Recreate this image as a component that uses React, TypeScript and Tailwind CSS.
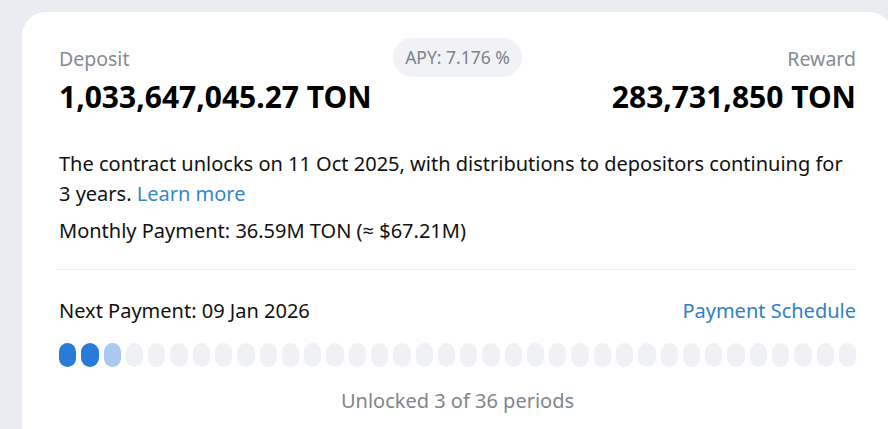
import React from "react";

export default function App() {
  const total = 36;
  const segs = Array.from({ length: total }, (_, i) => i);
  return (
    <div
      className="w-[888px] h-[429px] overflow-hidden bg-[#e9ecf0] pt-[12px] pl-[22px]"
      style={{ fontFamily: '"Noto Sans", "Open Sans", sans-serif' }}
    >
      <div className="w-[871px] h-[440px] bg-white rounded-[24px] px-[37px] pt-[26px]">
        <div className="grid grid-cols-[1fr_auto_1fr] items-start">
          <div className="pt-[8px] whitespace-nowrap">
            <div className="text-[19.5px] leading-[26px] text-[#868b92]">Deposit</div>
            <div className="mt-[7px] text-[30px] leading-[36px] font-bold text-black">
              1,033,647,045.27 TON
            </div>
          </div>
          <div className="h-[39px] px-[12px] rounded-full bg-[#f0f2f5] flex items-center text-[17.5px] text-[#7d838a]">
            APY: 7.176 %
          </div>
          <div className="pt-[8px] text-right whitespace-nowrap">
            <div className="text-[19.5px] leading-[26px] text-[#868b92]">Reward</div>
            <div className="mt-[7px] text-[30px] leading-[36px] font-bold text-black">
              283,731,850 TON
            </div>
          </div>
        </div>

        <p className="mt-[34px] text-[20px] leading-[30px] text-[#111]">
          The contract unlocks on 11 Oct 2025, with distributions to depositors continuing for 3
          years. <span className="text-[#3388c8]">Learn more</span>
        </p>
        <p className="mt-[7px] text-[20px] leading-[30px] text-[#111]">
          Monthly Payment: 36.59M TON (≈ $67.21M)
        </p>

        <div className="mt-[23px] h-px bg-[#eceef1] -ml-[3px]" />

        <div className="mt-[26px] flex justify-between items-center text-[20px] leading-[30px]">
          <span className="text-[#111]">Next Payment: 09 Jan 2026</span>
          <span className="text-[#2f80c8]">Payment Schedule</span>
        </div>

        <div className="mt-[17px] flex gap-[5px] h-[24px]">
          {segs.map((i) => (
            <div
              key={i}
              className={
                "flex-1 rounded-[9px] " +
                (i < 2 ? "bg-[#2a7ad9]" : i === 2 ? "bg-[#a9c9f0]" : "bg-[#eff1f4]")
              }
            />
          ))}
        </div>

        <div className="mt-[19px] text-center text-[20px] leading-[30px] text-[#80858c]">
          Unlocked 3 of 36 periods
        </div>
      </div>
    </div>
  );
}
